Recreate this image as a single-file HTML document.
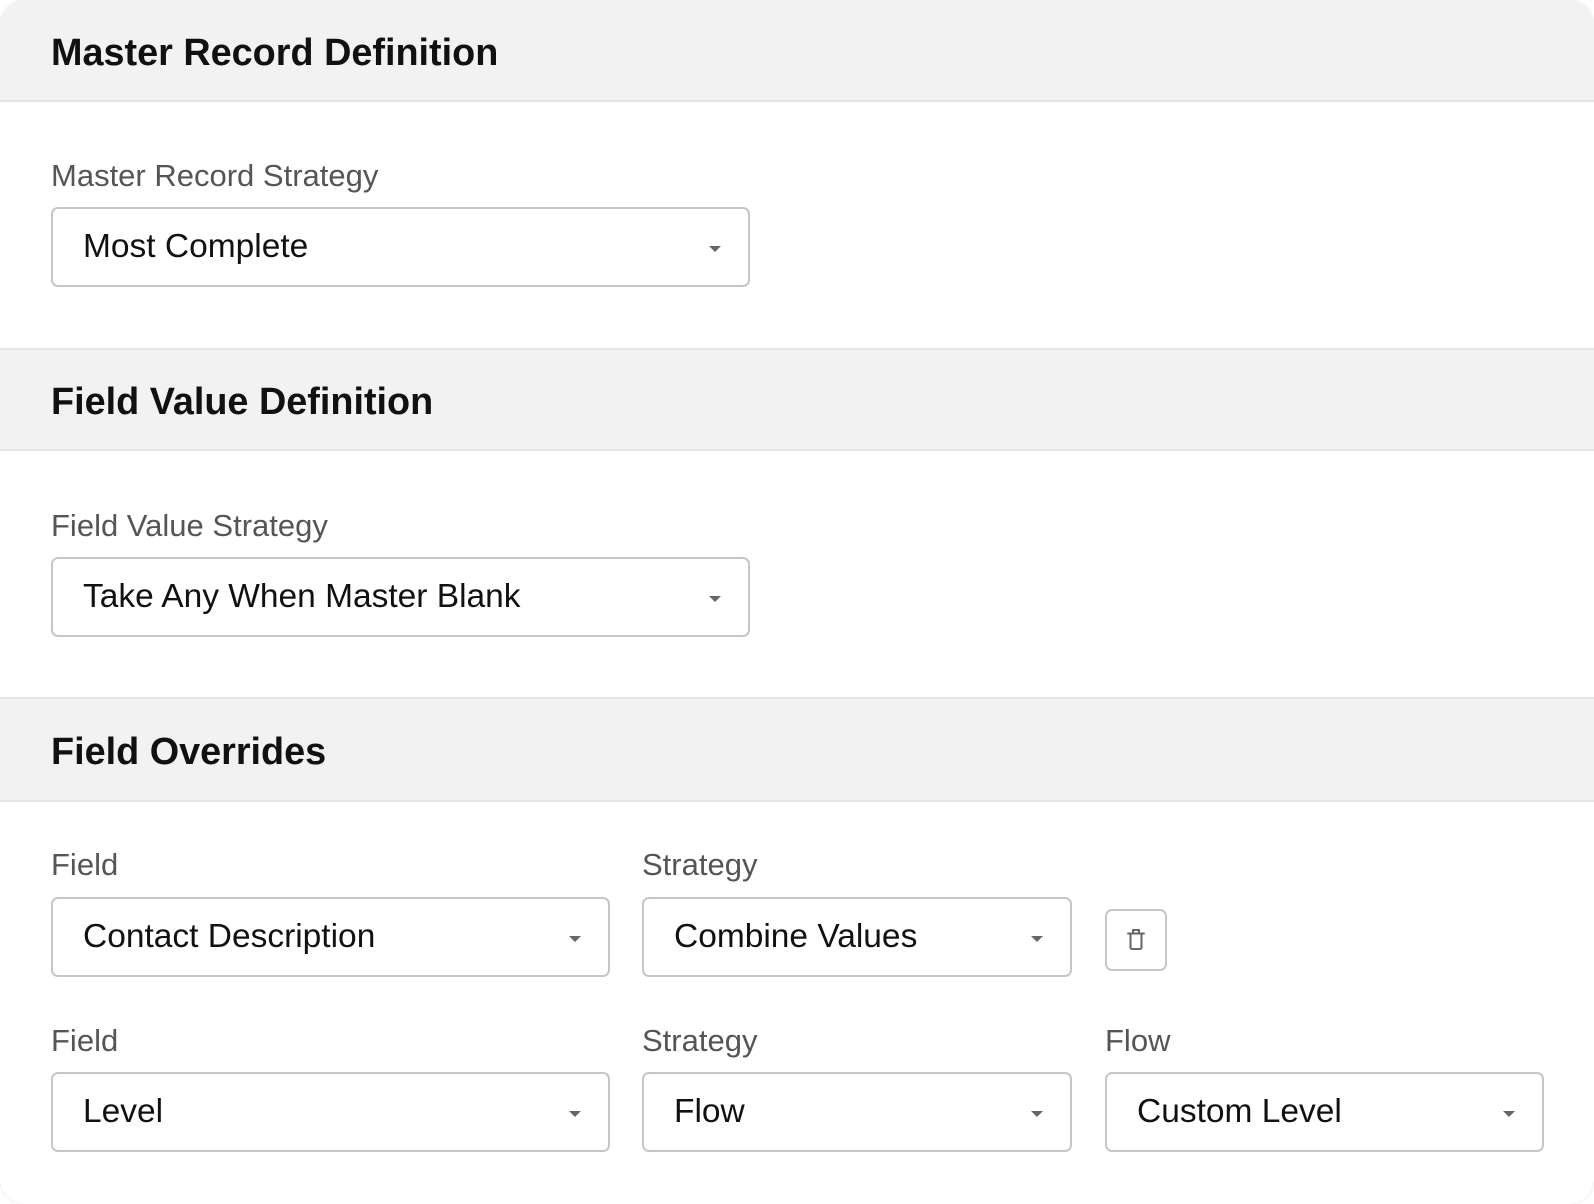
<!DOCTYPE html>
<html><head><meta charset="utf-8"><style>
*{box-sizing:border-box;margin:0;padding:0}
html,body{width:1594px;height:1204px;background:#fff;overflow:hidden;font-family:"Liberation Sans",Arial,sans-serif}
.card{position:absolute;left:0;top:0;width:1594px;height:1204px;border-radius:26px;background:#fff;overflow:hidden;box-shadow:0 0 3px rgba(0,0,0,.12)}
.hdr{position:absolute;left:0;width:1594px;background:#f2f2f2;border-top:2px solid #e4e4e6;border-bottom:2px solid #e4e4e6}
.hdr h2{position:absolute;left:51px;font-size:37.8px;font-weight:700;color:#111;line-height:1}
.lbl{position:absolute;font-size:31px;color:#555;line-height:1}
.sel{position:absolute;border:2px solid #c6c6c6;border-radius:7px;background:#fff;height:80px}
.sel span{position:absolute;left:30px;top:50%;transform:translateY(-50%);font-size:33.5px;color:#111}
.sel i{position:absolute;right:27px;top:37px;width:0;height:0;border-left:6px solid transparent;border-right:6px solid transparent;border-top:6px solid #666}
.trash{position:absolute;left:1105px;top:909px;width:62px;height:62px;border:2px solid #c6c6c6;border-radius:7px}
</style></head><body>
<div class="card">
<div class="hdr" style="top:-2px;height:104px"><h2 style="top:35px">Master Record Definition</h2></div>
<div class="lbl" style="left:51px;top:160px">Master Record Strategy</div>
<div class="sel" style="left:51px;top:207px;width:699px"><span>Most Complete</span><i></i></div>

<div class="hdr" style="top:348px;height:103px"><h2 style="top:34px">Field Value Definition</h2></div>
<div class="lbl" style="left:51px;top:510px">Field Value Strategy</div>
<div class="sel" style="left:51px;top:557px;width:699px"><span>Take Any When Master Blank</span><i></i></div>

<div class="hdr" style="top:697px;height:105px"><h2 style="top:35px">Field Overrides</h2></div>
<div class="lbl" style="left:51px;top:849px">Field</div>
<div class="lbl" style="left:642px;top:849px">Strategy</div>
<div class="sel" style="left:51px;top:897px;width:559px"><span>Contact Description</span><i></i></div>
<div class="sel" style="left:642px;top:897px;width:430px"><span>Combine Values</span><i></i></div>
<div class="trash"><svg width="58" height="58" viewBox="0 0 58 58" style="position:absolute;left:0;top:0"><g fill="none" stroke="#666" stroke-width="2" stroke-linejoin="round" stroke-linecap="round"><path d="M21 22.5h16"/><path d="M26 22.5v-3.5h6v3.5"/><path d="M23.5 22.5v14a1.5 1.5 0 0 0 1.5 1.5h8a1.5 1.5 0 0 0 1.5-1.5v-14"/></g></svg></div>

<div class="lbl" style="left:51px;top:1025px">Field</div>
<div class="lbl" style="left:642px;top:1025px">Strategy</div>
<div class="lbl" style="left:1105px;top:1025px">Flow</div>
<div class="sel" style="left:51px;top:1072px;width:559px"><span>Level</span><i></i></div>
<div class="sel" style="left:642px;top:1072px;width:430px"><span>Flow</span><i></i></div>
<div class="sel" style="left:1105px;top:1072px;width:439px"><span>Custom Level</span><i></i></div>
</div>
</body></html>
